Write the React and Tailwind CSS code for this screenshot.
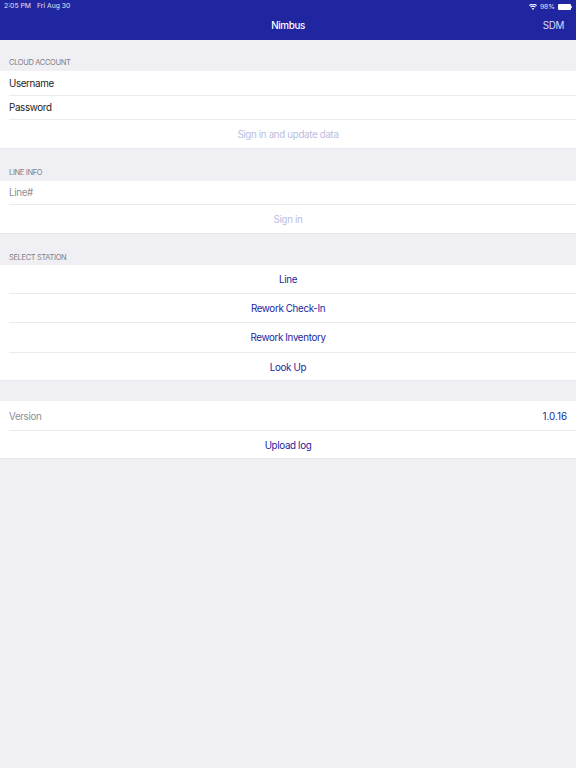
const groupCls = "bg-white shadow-[inset_0_-1px_0_#e8e8ec]";

function Group({ children }) {
  return <div className={groupCls}>{children}</div>;
}

function Row({ children, h, className = "" }) {
  return (
    <div className="pl-[9px]">
      <div className={`flex items-center ${h} border-b border-[#ebebef] ${className}`}>{children}</div>
    </div>
  );
}

function Label({ children, className = "" }) {
  return <div className={`pl-[9px] text-[7.5px] leading-[10px] text-[#808085] uppercase ${className}`}>{children}</div>;
}

export default function App() {
  return (
    <div className="w-[576px] h-[768px] overflow-hidden bg-[#efeff4] font-['Inter','Liberation_Sans',sans-serif] antialiased tracking-[-0.35px] text-[9.8px] flex flex-col">
      <div className="h-[40px] bg-[#2026a0] text-white relative shrink-0">
        <div className="h-[12px] flex items-center justify-between pl-[4px] pr-[4px] pt-[1px] text-[6.8px] tracking-[0px] text-[#e4e4f4]">
          <div className="flex gap-[6px]"><span>2:05 PM</span><span>Fri Aug 30</span></div>
          <div className="flex items-center gap-[3px] pt-[1px]">
            <svg width="8" height="6" viewBox="0 0 16 12" fill="white">
              <path d="M8 12 L5.4 8.9 A4 4 0 0 1 10.6 8.9 Z M3.9 7.1 L2.4 5.3 A8.6 8.6 0 0 1 13.6 5.3 L12.1 7.1 A6.3 6.3 0 0 0 3.9 7.1 Z M1.4 4.1 L0 2.4 A12.4 12.4 0 0 1 16 2.4 L14.6 4.1 A10.2 10.2 0 0 0 1.4 4.1 Z" />
            </svg>
            <span>98%</span>
            <div className="flex items-center">
              <div className="w-[13px] h-[6px] bg-white rounded-[1px]" />
              <div className="w-[1px] h-[2px] bg-[#c8c8e8]" />
            </div>
          </div>
        </div>
        <div className="h-[28px] flex items-center justify-center relative">
          <span className="font-medium">Nimbus</span>
          <span className="absolute right-[12px] text-[#dcdcf2]">SDM</span>
        </div>
      </div>

      <Label className="pt-[18px] pb-[3px]">Cloud Account</Label>
      <Group>
        <Row h="h-[25px]" className="pt-[3px]"><span className="text-[#1c1c1e]">Username</span></Row>
        <Row h="h-[24px]" className="pt-[2px]"><span className="text-[#1c1c1e]">Password</span></Row>
        <div className="h-[29px] pt-[2px] flex items-center justify-center text-[#bcbde3]">Sign in and update data</div>
      </Group>

      <Label className="pt-[19px] pb-[3px]">Line Info</Label>
      <Group>
        <Row h="h-[24px]" className="pt-[2px]"><span className="text-[#8e8e93]">Line#</span></Row>
        <div className="h-[29px] pt-[2px] flex items-center justify-center text-[#bcbde3]">Sign in</div>
      </Group>

      <Label className="pt-[19px] pb-[2px]">Select Station</Label>
      <Group>
        <Row h="h-[29px]" className="pt-[2px] justify-center pr-[9px] text-[#1a1fa0]">Line</Row>
        <Row h="h-[29px]" className="pt-[2px] justify-center pr-[9px] text-[#1a1fa0]">Rework Check-In</Row>
        <Row h="h-[30px]" className="pt-[2px] justify-center pr-[9px] text-[#1a1fa0]">Rework Inventory</Row>
        <div className="h-[28px] pt-[2px] flex items-center justify-center text-[#1a1fa0]">Look Up</div>
      </Group>

      <div className="h-[20px] shrink-0" />
      <Group>
        <Row h="h-[30px]" className="pt-[3px] justify-between pr-[9px]">
          <span className="text-[#8e8e93]">Version</span>
          <span className="text-[#1a1fa0] tracking-[0px]">1.0.16</span>
        </Row>
        <div className="h-[28px] pt-[2px] flex items-center justify-center text-[#1a1fa0]">Upload log</div>
      </Group>
    </div>
  );
}
